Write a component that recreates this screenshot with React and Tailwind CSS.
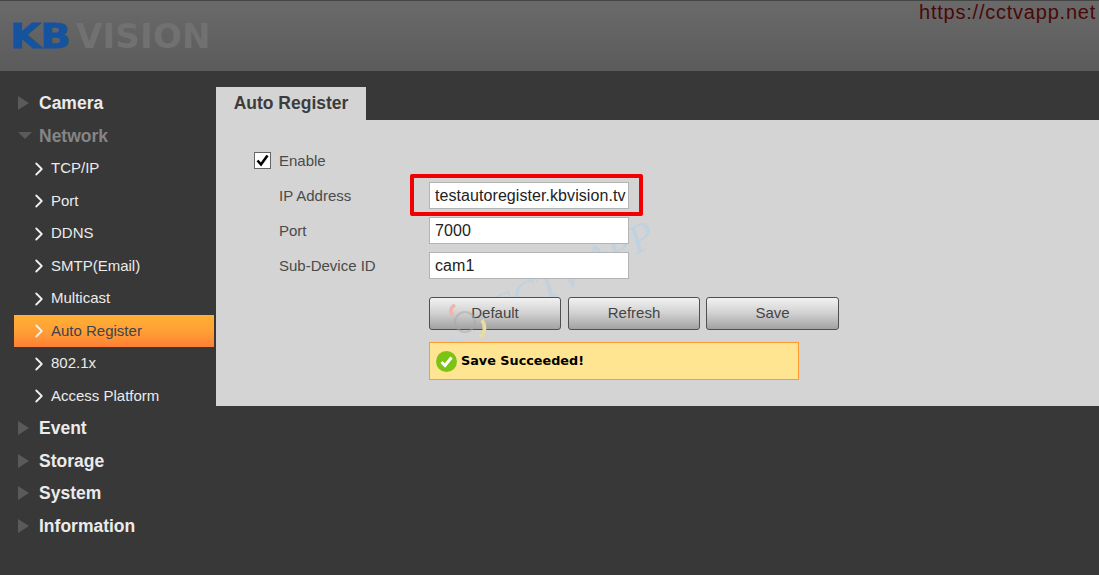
import { ChevronRight } from 'lucide-react';

const subItems = ['TCP/IP', 'Port', 'DDNS', 'SMTP(Email)', 'Multicast', 'Auto Register', '802.1x', 'Access Platform'];

function Triangle({ open }) {
  return (
    <svg width="14" height="14" viewBox="0 0 14 14" className="shrink-0">
      {open ? (
        <polygon points="0,3 14,3 7,10" fill="#5a5a5a" />
      ) : (
        <polygon points="0,0 11,7 0,14" fill="#5a5a5a" />
      )}
    </svg>
  );
}

function TopItem({ label, open }) {
  return (
    <div className="flex h-[32.5px] items-center pl-[18px]">
      <Triangle open={open} />
      <span className={`ml-[7px] text-[17.5px] font-bold ${open ? 'text-[#858585]' : 'text-[#ebebeb]'}`}>{label}</span>
    </div>
  );
}

function SubItem({ label }) {
  const active = label === 'Auto Register';
  return (
    <div
      className={`ml-[14px] mr-[2px] flex h-[32.5px] items-center pl-[18px] ${
        active ? 'bg-gradient-to-b from-[#ffb035] via-[#ffa035] to-[#ff7f35] text-[#3d4350]' : 'text-[#ebebeb]'
      }`}
    >
      <ChevronRight size={22} strokeWidth={2} className="-ml-[4px] mt-[1px] shrink-0 text-[#f0f0f0]" />
      <span className="ml-[1px] mt-[0.5px] text-[15px]">{label}</span>
    </div>
  );
}

function Field({ label, value, children }) {
  return (
    <div className="grid h-[35px] grid-cols-[25px_150px_200px] items-center">
      <div />
      <span className="mt-[2px] text-[15px] text-[#4a4a4a]">{label}</span>
      <div className="relative">
        <input
          readOnly
          value={value}
          className="h-[27px] w-[200px] border border-[#b4b4b4] bg-white pl-[5px] text-[16px] tracking-[0.07px] text-[#222] outline-none"
        />
        {children}
      </div>
    </div>
  );
}

function Btn({ label, className }) {
  return (
    <button
      className={`h-[33px] rounded-[3px] border border-[#4f4f4f] bg-gradient-to-b from-[#f2f2f2] via-[#d0d0d0] to-[#a2a2a2] text-[15px] text-[#444] ${className}`}
    >
      {label}
    </button>
  );
}

export default function App() {
  return (
    <div className="h-[575px] w-[1099px] overflow-hidden bg-[#383838] font-['Liberation_Sans',Arial,sans-serif]">
      {/* header */}
      <div className="flex h-[71px] justify-between border-t border-[#444] bg-gradient-to-b from-[#6a6a6a] to-[#5b5b5b]">
        <div className="ml-[10px] mt-[14px] flex h-[42px] items-center font-['DejaVu_Sans',sans-serif] leading-none">
          <span className="inline-block w-[66px] origin-left scale-x-[1.17] text-[34px] font-bold tracking-[-0.5px] text-[#16539f] [-webkit-text-stroke:1px_#16539f]">
            KB
          </span>
          <span className="text-[34px] font-bold tracking-[0.2px] text-[#717171]">VISION</span>
        </div>
        <span className="mr-[3px] text-[20px] leading-[22px] tracking-[0.77px] text-[#4a0808]">https://cctvapp.net</span>
      </div>

      <div className="flex items-start">
        {/* sidebar */}
        <div className="w-[216px] shrink-0 pt-[16px]">
          <TopItem label="Camera" />
          <TopItem label="Network" open />
          {subItems.map((s) => (
            <SubItem key={s} label={s} />
          ))}
          <TopItem label="Event" />
          <TopItem label="Storage" />
          <TopItem label="System" />
          <TopItem label="Information" />
        </div>

        {/* content */}
        <div className="flex-1 pt-[16px]">
          <div className="flex h-[33px] w-[150px] items-center justify-center bg-[#d4d4d4] text-[17.5px] font-bold text-[#3c3c3c]">
            Auto Register
          </div>
          <div className="relative h-[286px] overflow-hidden bg-[#d4d4d4] pl-[38px] pt-[23px]">
            {/* watermark */}
            <span className="absolute left-[264px] top-[130px] -rotate-[27deg] font-['Liberation_Serif',serif] text-[40px] leading-[46px] italic whitespace-nowrap text-[#c0d2e0]">
              CCTV APP
            </span>

            <div className="relative flex h-[35px] items-center">
              <span className="flex h-[17px] w-[17px] items-center justify-center border border-[#666] bg-white">
                <svg width="15" height="15" viewBox="0 0 15 15">
                  <path d="M2.5 7.5 L6 11.5 L12.5 2.5" fill="none" stroke="#000" strokeWidth="2.6" />
                </svg>
              </span>
              <span className="ml-[8px] mt-[2px] text-[15px] text-[#4a4a4a]">Enable</span>
            </div>

            <div className="relative">
              <Field label="IP Address" value="testautoregister.kbvision.tv">
                <div className="absolute -left-[19px] -top-[8px] h-[42px] w-[233px] rounded-[2px] border-[4px] border-[#f00000]" />
              </Field>
              <Field label="Port" value="7000" />
              <Field label="Sub-Device ID" value="cam1" />
            </div>

            <div className="relative ml-[175px] mt-[14px] flex">
              <Btn label="Default" className="w-[132px]" />
              <Btn label="Refresh" className="ml-[7px] w-[132px]" />
              <Btn label="Save" className="ml-[6px] w-[133px]" />
            </div>

            {/* watermark mark, sits over the Default button */}
            <svg width="55" height="50" viewBox="0 0 55 50" className="pointer-events-none absolute left-[224px] top-[180px]">
              <circle cx="25" cy="22" r="10" fill="none" stroke="#a8a8a8" strokeOpacity="0.5" strokeWidth="2" />
              <path d="M13 16 Q8 9 15 5" fill="none" stroke="#f0b4ac" strokeWidth="3.5" />
              <path d="M42 20 Q48 30 40 37" fill="none" stroke="#ecdc9c" strokeWidth="3.5" />
              <path d="M10 38 Q15 44 24 41" fill="none" stroke="#bcd8ec" strokeWidth="3.5" />
            </svg>

            <div className="relative ml-[175px] mt-[12px] flex h-[38px] w-[370px] items-center border border-[#ff9a2e] bg-[#ffe591] pl-[6px]">
              <span className="flex h-[21px] w-[21px] items-center justify-center rounded-full bg-[#7cc313]">
                <svg width="15" height="15" viewBox="0 0 15 15">
                  <path d="M2.5 8 L6 11.5 L12.5 3.5" fill="none" stroke="#fff" strokeWidth="3" />
                </svg>
              </span>
              <span className="ml-[4px] font-['DejaVu_Sans',sans-serif] text-[12.8px] font-bold text-black">Save Succeeded!</span>
            </div>
          </div>
        </div>
      </div>
    </div>
  );
}
